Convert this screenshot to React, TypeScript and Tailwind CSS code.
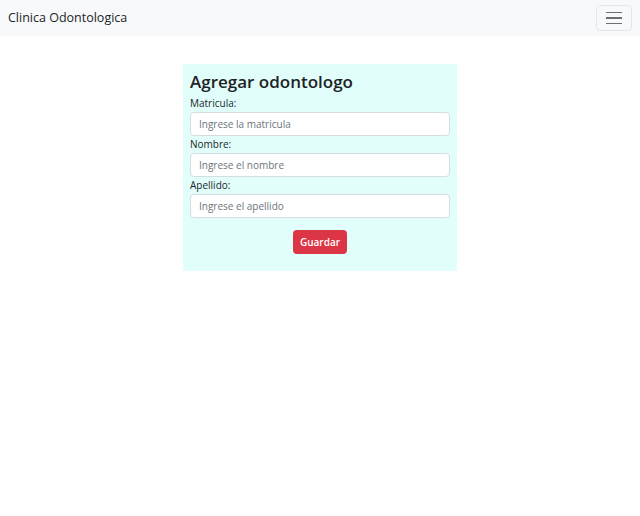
import React from "react";

export default function App() {
  const font = { fontFamily: '"Open Sans", "Noto Sans", sans-serif' };
  const inputCls =
    "h-[24px] bg-white border border-[#d5dde0] rounded-[4px] px-[8px] text-[10px] text-[#212529] placeholder:text-[#6c757d] outline-none";
  return (
    <div className="w-[640px] h-[516px] bg-white text-[#212529]" style={font}>
      <nav className="h-[36px] bg-[#f8f9fa] flex items-center justify-between pl-[8px] pr-[8px]">
        <span className="text-[12.5px] text-[#212529] leading-none">Clinica Odontologica</span>
        <button className="w-[36px] h-[26px] border border-[#e6e7e8] rounded-[4px] flex flex-col items-center justify-center gap-[4px]">
          <span className="block w-[16px] h-[1.5px] bg-[#6c6f72]" />
          <span className="block w-[16px] h-[1.5px] bg-[#6c6f72]" />
          <span className="block w-[16px] h-[1.5px] bg-[#6c6f72]" />
        </button>
      </nav>
      <div className="flex justify-center pt-[28px]">
        <div className="w-[274px] bg-[#e1fefa] rounded-[2px] px-[7px] pt-[7px] pb-[17px]">
          <h3 className="text-[17px] font-semibold leading-[22px] mb-[4px] text-[#1f2326]">Agregar odontologo</h3>
          <form className="flex flex-col">
            <label className="text-[10px] leading-[13px] mb-[2px]">Matricula:</label>
            <input className={inputCls} placeholder="Ingrese la matricula" />
            <label className="text-[10px] leading-[13px] mt-[2px] mb-[2px]">Nombre:</label>
            <input className={inputCls} placeholder="Ingrese el nombre" />
            <label className="text-[10px] leading-[13px] mt-[2px] mb-[2px]">Apellido:</label>
            <input className={inputCls} placeholder="Ingrese el apellido" />
            <div className="flex justify-center mt-[12px]">
              <button
                type="button"
                className="w-[54px] h-[24px] bg-[#dc3545] rounded-[4px] text-white text-[10px] font-semibold"
              >
                Guardar
              </button>
            </div>
          </form>
        </div>
      </div>
    </div>
  );
}
